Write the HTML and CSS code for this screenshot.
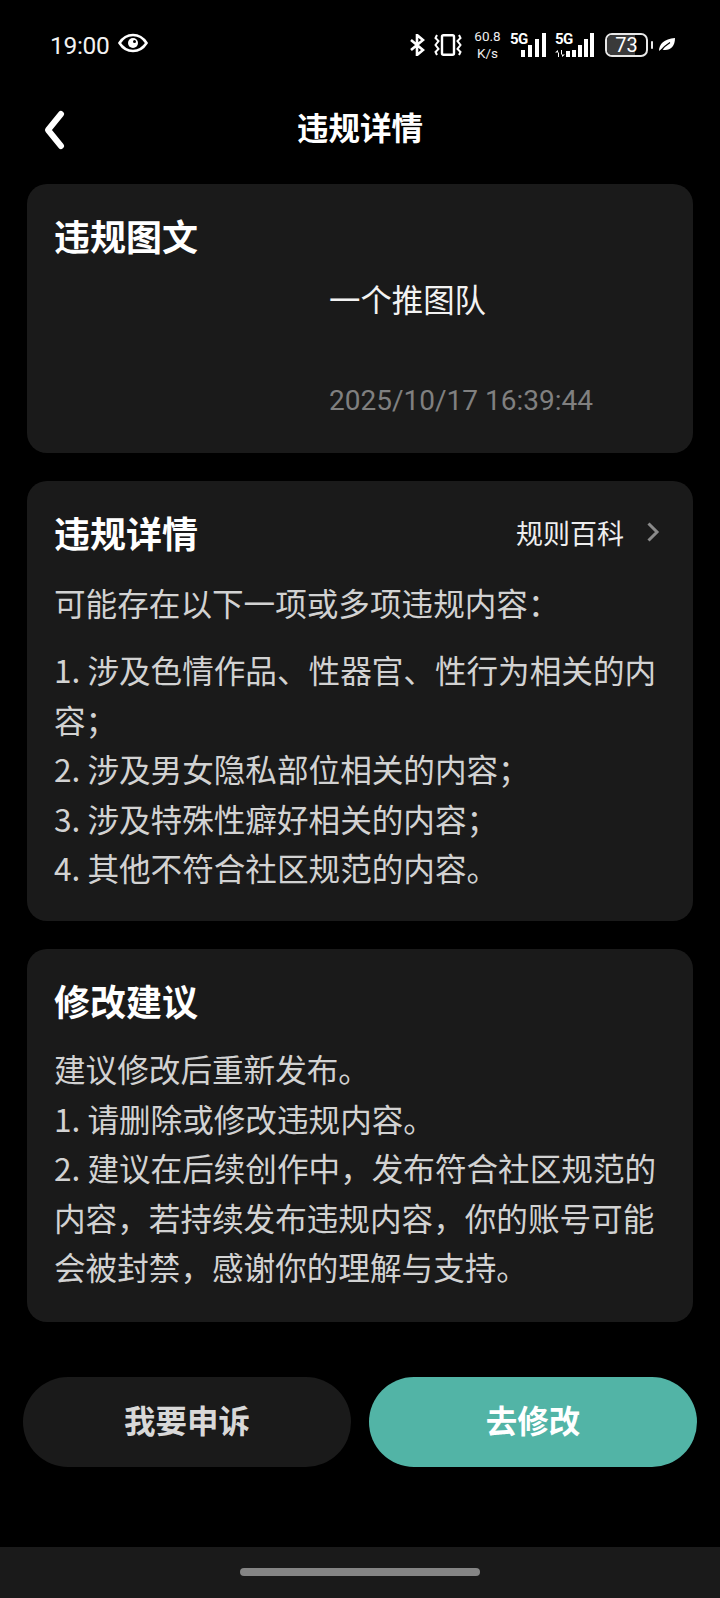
FILE: index.html
```html
<!DOCTYPE html>
<html lang="zh-CN">

<head>
    <meta charset="UTF-8">
    <meta name="viewport" content="width=device-width, initial-scale=1.0">
    <title>违规详情</title>
    <link rel="stylesheet" href="styles.css">
</head>

<body>
    <div class="status-bar">
        <div class="status-left">
            <span class="clock">19:00</span>
            <svg class="eye-icon" width="30" height="20" viewBox="0 0 30 20">
                <path d="M1.5 10C5 4.500 9.500 2 15 2s10 2.500 13.500 8C25 15.500 20.500 18 15 18S5 15.500 1.500 10z" fill="none" stroke="#fff" stroke-width="2.600" />
                <circle cx="15" cy="10" r="5" fill="#fff" />
                <circle cx="16.500" cy="8.500" r="1.500" fill="#000" />
            </svg>
        </div>
        <div class="status-right">
            <svg class="bt-icon" width="16" height="22" viewBox="0 0 16 22">
                <path d="M2 6l12 10-6 5V1l6 5L2 16" fill="none" stroke="#fff" stroke-width="2.600" />
            </svg>
            <svg class="vibrate-icon" width="28" height="22" viewBox="0 0 28 22">
                <rect x="8" y="1.200" width="12" height="19.600" rx="1.500" fill="none" stroke="#fff" stroke-width="2.400" />
                <path d="M3 1L1.500 4 4.500 7 1.500 11 4.500 15 1.500 18 3 21M25 1l1.500 3-3 3 3 4-3 4 3 3-1.500 3" fill="none" stroke="#fff" stroke-width="2" />
            </svg>
            <div class="net-speed"><span>60.8</span><span>K/s</span></div>
            <div class="signal">
                <span class="signal-label">5G</span>
                <div class="bars"><i class="b1"></i><i class="b2"></i><i class="b3"></i><i class="b4"></i></div>
            </div>
            <div class="signal second">
                <span class="signal-label">5G</span>
                <svg class="arrows" width="10" height="7" viewBox="0 0 10 7">
                    <path d="M0 2.500L3 0v7h1V2.500zM10 4.500L7 7V0H6v4.500z" fill="#fff" />
                </svg>
                <div class="bars"><i class="b0"></i><i class="b1"></i><i class="b2"></i><i class="b3"></i><i class="b4"></i></div>
            </div>
            <div class="battery">
                <div class="battery-body"><div class="battery-fill"></div><span>73</span></div>
                <div class="battery-cap"></div>
            </div>
            <svg class="leaf-icon" width="16" height="14" viewBox="0 0 16 14">
                <path d="M0 13C0 6 5 1 16 0c0 8-4 12-10 12-1.500 0-2.500-.5-3-1z" fill="#fff" />
                <path d="M1 13.500C4 9.500 7 7 11 4.500" fill="none" stroke="#000" stroke-width="1.300" />
            </svg>
        </div>
    </div>

    <header class="nav">
        <svg class="back-icon" width="24" height="44" viewBox="0 0 24 44">
            <path d="M18 6L5 22l13 16" fill="none" stroke="#fff" stroke-width="6" stroke-linecap="round" stroke-linejoin="round" />
        </svg>
        <h1>违规详情</h1>
    </header>

    <main class="content">
        <section class="card card-post">
            <h2>违规图文</h2>
            <div class="post">
                <p class="post-title">一个推图队</p>
                <p class="post-time">2025/10/17 16:39:44</p>
            </div>
        </section>

        <section class="card card-detail">
            <div class="card-head">
                <h2>违规详情</h2>
                <div class="rule-link">
                    <span>规则百科</span>
                    <svg width="14" height="22" viewBox="0 0 14 22">
                        <path d="M2.500 2.500L11 11l-8.500 8.500" fill="none" stroke="#8a8a8a" stroke-width="3" />
                    </svg>
                </div>
            </div>
            <p class="lead">可能存在以下一项或多项违规内容：</p>
            <p class="body-text">1. 涉及色情作品、性器官、性行为相关的内容；<br>2. 涉及男女隐私部位相关的内容；<br>3. 涉及特殊性癖好相关的内容；<br>4. 其他不符合社区规范的内容。</p>
        </section>

        <section class="card card-advice">
            <h2>修改建议</h2>
            <p class="body-text">建议修改后重新发布。<br>1. 请删除或修改违规内容。<br>2. 建议在后续创作中，发布符合社区规范的内容，若持续发布违规内容，你的账号可能会被封禁，感谢你的理解与支持。</p>
        </section>
    </main>

    <div class="actions">
        <button class="btn btn-dark">我要申诉</button>
        <button class="btn btn-green">去修改</button>
    </div>

    <div class="home-bar">
        <div class="home-handle"></div>
    </div>
</body>

</html>
```

FILE: styles.css
```css
* {
    box-sizing: border-box;
}

html,
body {
    margin: 0;
    padding: 0;
}

body {
    width: 720px;
    height: 1598px;
    background: #000;
    color: #fff;
    font-family: "Noto Sans CJK SC", "Noto Sans", sans-serif;
    display: flex;
    flex-direction: column;
    overflow: hidden;
}

h1,
h2,
p {
    margin: 0;
}

.status-bar {
    height: 90px;
    padding: 0 45px 0 50px;
    display: flex;
    justify-content: space-between;
    align-items: center;
}

.status-left {
    display: flex;
    align-items: center;
    gap: 8px;
}

.clock {
    font-family: Roboto, sans-serif;
    font-size: 24.500px;
    letter-spacing: -0.3px;
    color: #f2f2f2;
}

.eye-icon {
    margin-top: -4px;
}

.status-right {
    display: flex;
    align-items: center;
}

.vibrate-icon {
    margin-left: 9px;
}

.net-speed {
    display: flex;
    flex-direction: column;
    align-items: center;
    font-family: Roboto, sans-serif;
    font-size: 13.500px;
    line-height: 17px;
    width: 27px;
    margin-left: 12px;
    color: #eee;
}

.signal {
    position: relative;
    width: 36px;
    height: 24px;
    margin-left: 9px;
}

.signal.second {
    width: 39px;
}

.signal-label {
    position: absolute;
    left: 0;
    top: -1px;
    font-family: Roboto, sans-serif;
    font-weight: 700;
    font-size: 15px;
    line-height: 14px;
    letter-spacing: -0.5px;
}

.bars {
    position: absolute;
    right: 0;
    bottom: 0;
    display: flex;
    align-items: flex-end;
    gap: 3px;
}

.second .bars {
    gap: 2px;
}

.bars i {
    display: block;
    width: 4px;
    background: #fff;
}

.bars .b0 {
    height: 6px;
}

.bars .b1 {
    height: 7px;
}

.bars .b2 {
    height: 12px;
}

.bars .b3 {
    height: 18px;
}

.bars .b4 {
    height: 24px;
}

.arrows {
    position: absolute;
    left: 0;
    bottom: 0;
}

.battery {
    display: flex;
    align-items: center;
    gap: 3px;
    margin-left: 11px;
}

.battery-body {
    position: relative;
    width: 43px;
    height: 24px;
    border: 2px solid #e8e8e8;
    border-radius: 7px;
    text-align: center;
    overflow: hidden;
}

.battery-fill {
    position: absolute;
    left: 0;
    top: 0;
    bottom: 0;
    width: 73%;
    background: #3a3a3a;
}

.battery-body span {
    position: relative;
    font-family: Roboto, sans-serif;
    font-size: 20px;
    line-height: 21px;
    display: block;
}

.battery-cap {
    width: 2px;
    height: 8px;
    background: #e8e8e8;
    border-radius: 1px;
}

.leaf-icon {
    margin-left: 6px;
}

.nav {
    position: relative;
    height: 76px;
    padding-bottom: 4px;
    display: flex;
    align-items: center;
    justify-content: center;
}

.nav h1 {
    font-size: 31.500px;
    font-weight: 700;
    line-height: 40px;
}

.back-icon {
    position: absolute;
    left: 43px;
    top: 18px;
}

.content {
    padding: 18px 27px 0;
    display: flex;
    flex-direction: column;
    gap: 28px;
}

.card {
    background: #1a1a1a;
    border-radius: 20px;
    padding: 28px 28px 0 27px;
}

.card h2 {
    font-size: 36px;
    font-weight: 700;
    line-height: 46px;
}

.card-post {
    height: 269px;
}

.post {
    margin-left: 275px;
    margin-top: 19px;
}

.post-title {
    font-size: 31.400px;
    line-height: 44px;
    color: #f2f2f2;
}

.post-time {
    margin-top: 62px;
    font-family: Roboto, sans-serif;
    font-size: 28px;
    line-height: 36px;
    color: #808080;
}

.card-detail {
    height: 440px;
}

.card-head {
    display: flex;
    justify-content: space-between;
    align-items: center;
}

.rule-link {
    display: flex;
    align-items: center;
    gap: 22px;
    font-size: 27px;
    color: #eee;
    padding-right: 5px;
}

.lead {
    margin-top: 25px;
    font-size: 31.600px;
    line-height: 44px;
    color: #d2d2d2;
}

.body-text {
    font-size: 31.600px;
    line-height: 49.500px;
    color: #d2d2d2;
}

.card-detail .body-text {
    margin-top: 21px;
}

.card-advice {
    height: 373px;
}

.card-advice .body-text {
    margin-top: 21px;
}

.actions {
    margin-top: 55px;
    padding: 0 23px;
    display: flex;
    gap: 18px;
}

.btn {
    flex: 1;
    height: 90px;
    padding: 0 0 6px;
    border: 0;
    border-radius: 45px;
    font-family: inherit;
    font-size: 31.500px;
    font-weight: 700;
}

.btn-dark {
    background: #1a1a1a;
    color: #d8d8d8;
}

.btn-green {
    background: #52b4a6;
    color: #fff;
}

.home-bar {
    margin-top: auto;
    height: 51px;
    background: #1a1a1a;
    padding-top: 21px;
}

.home-handle {
    width: 240px;
    height: 8px;
    margin: 0 auto;
    border-radius: 4px;
    background: #858585;
}
```
